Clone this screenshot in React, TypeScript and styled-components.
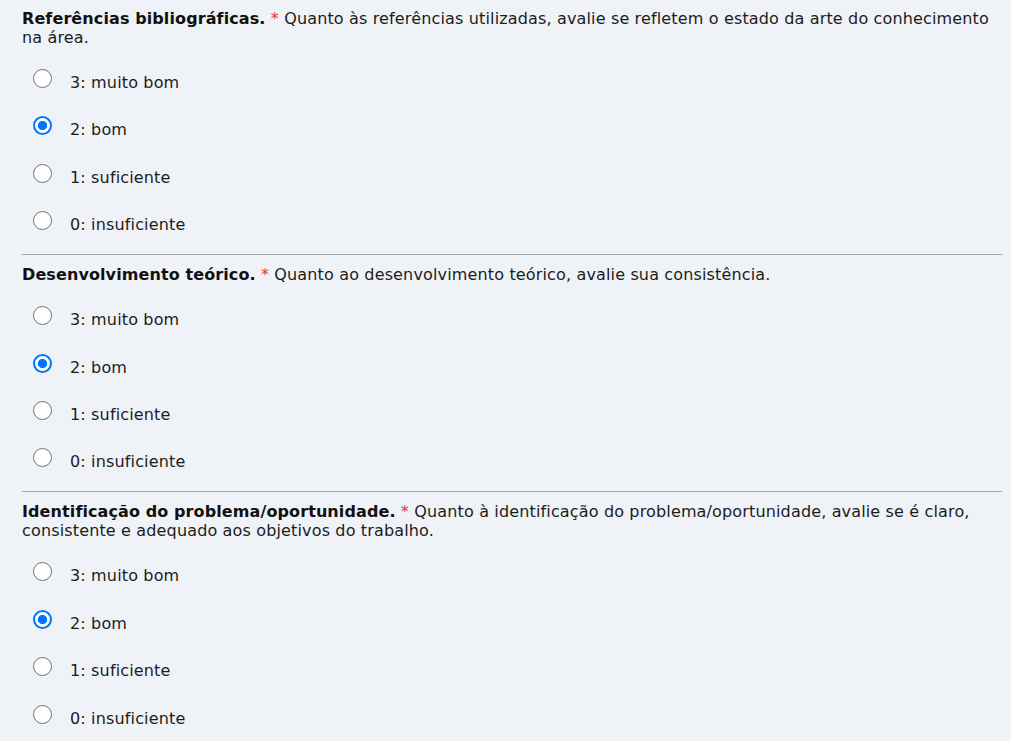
import React, { useState } from "react";
import styled, { createGlobalStyle } from "styled-components";

const GlobalStyle = createGlobalStyle`
  html, body {
    margin: 0;
    padding: 0;
    background: #eff2f7;
  }
  body {
    font-family: "DejaVu Sans", Verdana, sans-serif;
    font-size: 16px;
    letter-spacing: 0.15px;
    color: #1c1c1c;
  }
`;

const Page = styled.main`
  padding: 0 9px 0 22px;
`;

const Section = styled.fieldset`
  margin: 0;
  border: none;
  border-bottom: 1px solid #a3a3a3;
  padding: 9px 0 20px;
  & + & {
    padding-top: 10px;
  }
`;

const Title = styled.legend`
  display: contents;
`;

const TitleText = styled.p`
  margin: 0;
  line-height: 19px;
  font-size: 16px;
  color: #1c1c1c;
`;

const Strong = styled.strong`
  font-weight: 700;
  letter-spacing: 0.1px;
  color: #111;
`;

const Required = styled.span`
  color: #dc3545;
`;

const OptionList = styled.div`
  display: flex;
  flex-direction: column;
  gap: 24.4px;
  margin-top: 22px;
  padding-left: 11px;
`;

const OptionRow = styled.label`
  display: flex;
  align-items: flex-start;
  gap: 18px;
  cursor: pointer;
`;

const Radio = styled.input.attrs({ type: "radio" })`
  appearance: none;
  -webkit-appearance: none;
  margin: 0;
  width: 19px;
  height: 19px;
  flex: none;
  border-radius: 50%;
  border: 1.6px solid #737373;
  background: #fff;
  box-sizing: border-box;
  &:checked {
    border: 2px solid #0075ff;
    background: radial-gradient(circle, #0075ff 0 4.3px, #fff 4.9px);
  }
`;

const OptionLabel = styled.span`
  padding-top: 4px;
  line-height: 19px;
`;

type Q = { id: string; title: string; text: string };

const questions: Q[] = [
  {
    id: "ref",
    title: "Referências bibliográficas.",
    text: "Quanto às referências utilizadas, avalie se refletem o estado da arte do conhecimento na área.",
  },
  {
    id: "dev",
    title: "Desenvolvimento teórico.",
    text: "Quanto ao desenvolvimento teórico, avalie sua consistência.",
  },
  {
    id: "ident",
    title: "Identificação do problema/oportunidade.",
    text: "Quanto à identificação do problema/oportunidade, avalie se é claro, consistente e adequado aos objetivos do trabalho.",
  },
];

const options = [
  { value: "3", label: "3: muito bom" },
  { value: "2", label: "2: bom" },
  { value: "1", label: "1: suficiente" },
  { value: "0", label: "0: insuficiente" },
];

export default function App() {
  const [answers, setAnswers] = useState<Record<string, string>>({
    ref: "2",
    dev: "2",
    ident: "2",
  });

  return (
    <>
      <GlobalStyle />
      <Page>
        {questions.map((q) => (
          <Section key={q.id}>
            <Title>
              <TitleText>
                <Strong>{q.title}</Strong> <Required>*</Required> {q.text}
              </TitleText>
            </Title>
            <OptionList>
              {options.map((o) => (
                <OptionRow key={o.value}>
                  <Radio
                    name={q.id}
                    value={o.value}
                    checked={answers[q.id] === o.value}
                    onChange={() => setAnswers((a) => ({ ...a, [q.id]: o.value }))}
                  />
                  <OptionLabel>{o.label}</OptionLabel>
                </OptionRow>
              ))}
            </OptionList>
          </Section>
        ))}
      </Page>
    </>
  );
}
